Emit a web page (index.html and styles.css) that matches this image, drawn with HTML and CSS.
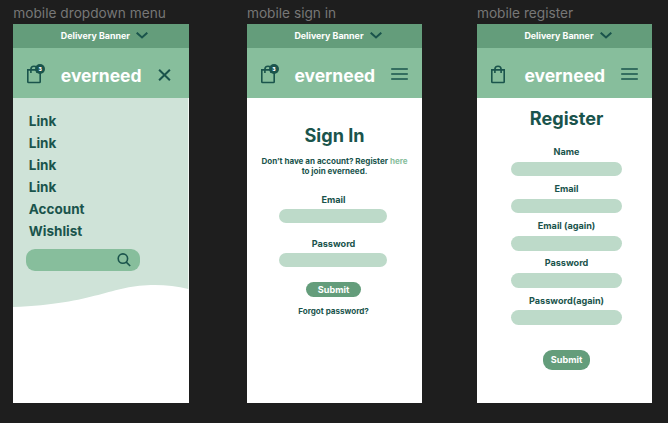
FILE: index.html
```
<!DOCTYPE html>
<html lang="en">
<head>
<meta charset="utf-8">
<title>everneed mobile</title>
<link rel="stylesheet" href="styles.css">
</head>
<body>
<svg class="defs" width="0" height="0">
  <symbol id="chevron" viewBox="0 0 12 7"><path d="M.7 .7 6 5.5 11.3 .7" fill="none" stroke="currentColor" stroke-width="2"/></symbol>
  <symbol id="bag" viewBox="0 0 16 19"><path d="M1.8 4.9h12.4v11.8q0 .8-.8.8H2.6q-.8 0-.8-.8zM4.9 8V4.2q0-3 3.1-3t3.1 3V8" fill="none" stroke="currentColor" stroke-width="1.6"/></symbol>
  <symbol id="menu" viewBox="0 0 17 12"><path d="M.2 1h16.6M.2 6h16.6M.2 11h16.6" stroke="currentColor" stroke-width="1.6"/></symbol>
  <symbol id="close" viewBox="0 0 12 12"><path d="m.6.7 10.8 10.6M11.4.7.6 11.3" stroke="currentColor" stroke-width="2"/></symbol>
  <symbol id="search" viewBox="0 0 14 14"><g fill="none" stroke="currentColor" stroke-width="1.6"><circle cx="5.9" cy="5.6" r="4.7"/><path d="m9 8.9 4.2 4.1"/></g></symbol>
</svg>
<main class="board">
  <section class="frame">
    <h2 class="frame-name">mobile dropdown menu</h2>
    <div class="phone">
      <div class="banner"><span>Delivery Banner</span><svg class="chevron"><use href="#chevron"/></svg></div>
      <header class="header">
        <span class="cart"><svg class="bag"><use href="#bag"/></svg><b class="badge">3</b></span>
        <span class="brand">everneed</span>
        <svg class="close"><use href="#close"/></svg>
      </header>
      <nav class="menu">
        <svg class="wave" viewBox="0 0 175.3 210"><path d="M0 0H175.3V191C165 188.3 153 187 142 187 97 187 83 206 0 209Z"/></svg>
        <a>Link</a><a>Link</a><a>Link</a><a>Link</a><a>Account</a><a>Wishlist</a>
        <div class="search"><svg class="search-icon"><use href="#search"/></svg></div>
      </nav>
    </div>
  </section>
  <section class="frame">
    <h2 class="frame-name">mobile sign in</h2>
    <div class="phone">
      <div class="banner"><span>Delivery Banner</span><svg class="chevron"><use href="#chevron"/></svg></div>
      <header class="header">
        <span class="cart"><svg class="bag"><use href="#bag"/></svg><b class="badge">3</b></span>
        <span class="brand">everneed</span>
        <svg class="burger"><use href="#menu"/></svg>
      </header>
      <div class="form signin">
        <h1>Sign In</h1>
        <p class="note">Don’t have an account? Register <a>here</a><br>to join everneed.</p>
        <div class="field"><span>Email</span><i></i></div>
        <div class="field"><span>Password</span><i></i></div>
        <div class="submit">Submit</div>
        <p class="forgot">Forgot password?</p>
      </div>
    </div>
  </section>
  <section class="frame">
    <h2 class="frame-name">mobile register</h2>
    <div class="phone">
      <div class="banner"><span>Delivery Banner</span><svg class="chevron"><use href="#chevron"/></svg></div>
      <header class="header">
        <span class="cart"><svg class="bag"><use href="#bag"/></svg></span>
        <span class="brand">everneed</span>
        <svg class="burger"><use href="#menu"/></svg>
      </header>
      <div class="form register">
        <h1>Register</h1>
        <div class="field"><span>Name</span><i></i></div>
        <div class="field"><span>Email</span><i></i></div>
        <div class="field"><span>Email (again)</span><i></i></div>
        <div class="field"><span>Password</span><i></i></div>
        <div class="field"><span>Password(again)</span><i></i></div>
        <div class="submit">Submit</div>
      </div>
    </div>
  </section>
</main>
</body>
</html>
```
FILE: styles.css
```
* { box-sizing: border-box; margin: 0; padding: 0; }
body { background: #1e1e1e; color: #1a544c; font-family: Inter, "Liberation Sans", sans-serif; font-weight: 700; height: 423px; overflow: hidden; }
svg { display: block; flex: none; }
.defs { position: absolute; }
.board { display: grid; grid-template-columns: 175.3px 175.3px 175.3px; column-gap: 56.5px; padding: 4px 0 0 13.3px; }
.frame:nth-child(2) { margin-left: 1.8px; margin-right: -1.8px; }
.frame-name { height: 20px; line-height: 19px; font-size: 13.7px; font-weight: 400; color: #777; white-space: nowrap; }
.phone { width: 175.3px; height: 379.3px; background: #fff; }
.banner { height: 23.6px; background: #649d7b; color: #fff; font-size: 8.9px; display: flex; align-items: center; padding-left: 47.5px; }
.banner span { width: 75.5px; white-space: nowrap; }
.chevron { width: 12px; height: 7px; color: #1a544c; }
.header { height: 50.6px; background: #87be9c; display: flex; align-items: center; padding: 3px 0 0 13px; }
.cart { position: relative; width: 34.5px; flex: none; }
.bag { width: 16px; height: 19px; }
.badge { position: absolute; left: 9px; top: -1px; width: 10px; height: 10px; border-radius: 50%; background: #1a544c; color: #fff; font-size: 5px; line-height: 10px; text-align: center; }
.brand { width: 97px; padding-top: 2.6px; color: #fff; font-size: 17.5px; line-height: 22px; }
.burger { width: 17px; height: 12px; margin-top: -1px; }
.close { width: 13px; height: 12px; margin-top: 2px; }
.menu { position: relative; height: 210px; padding: 12px 0 0 15.5px; font-size: 13.5px; }
.wave { position: absolute; left: 0; top: 0; width: 175.3px; height: 210px; fill: #cfe3d8; }
.menu a { position: relative; display: block; height: 22px; line-height: 22px; }
.search { position: relative; display: flex; align-items: center; justify-content: flex-end; width: 113.4px; height: 22.4px; margin: 6.8px 0 0 -2.7px; padding-right: 8.5px; border-radius: 9px; background: #87be9c; }
.search-icon { width: 14px; height: 14px; }
.form { display: flex; flex-direction: column; align-items: center; font-size: 9.1px; text-align: center; }
.form h1 { font-size: 18.1px; line-height: 24px; }
.note { font-size: 8.05px; line-height: 10px; white-space: nowrap; }
.note a { color: #87be9c; }
.field { display: flex; flex-direction: column; align-items: center; }
.field span { line-height: 12px; height: 12px; }
.field i { display: block; background: #bddac9; border-radius: 8px; }
.submit { background: #649d7b; color: #fff; display: flex; align-items: center; justify-content: center; }
.signin { padding-top: 25px; }
.signin .note { margin: 9.3px 0 17.5px; }
.signin .field { height: 43.8px; }
.signin .field span { margin-right: 2px; }
.signin .field i { width: 108.5px; height: 14px; margin: 3.2px 3px 0 0; }
.signin .submit { width: 55px; height: 15.3px; border-radius: 8px; margin: .5px 2px 0 0; }
.forgot { font-size: 8.05px; line-height: 10px; margin: 9px 2px 0 0; }
.register { padding-top: 7.8px; }
.register h1 { margin: 0 0 16.2px 4px; }
.register .field { height: 37.1px; margin-left: 4px; }
.register .field i { width: 111.5px; height: 14.4px; margin-top: 3.8px; }
.register .submit { width: 46.7px; height: 19.6px; border-radius: 9px; padding-bottom: 1px; margin: 18.4px 0 0 4px; }
```
